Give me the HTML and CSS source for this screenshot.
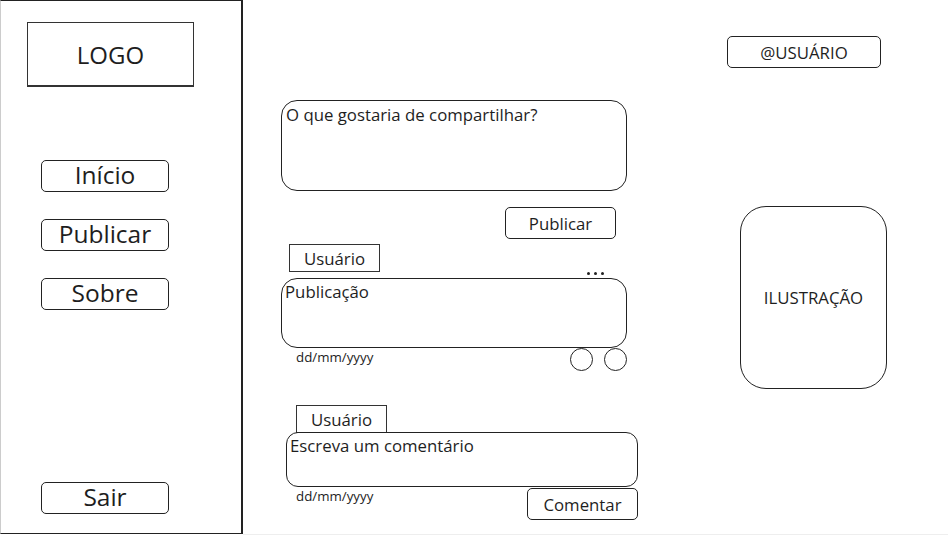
FILE: index.html
```html
<!DOCTYPE html>
<html lang="pt-BR">
<head>
  <meta charset="UTF-8" />
  <title>Rede - Início</title>
  <link rel="stylesheet" href="styles.css">
</head>
<body>
  <aside class="sidebar">
    <div class="logo">LOGO</div>
    <nav class="menu">
      <a class="menu-btn" href="#">Início</a>
      <a class="menu-btn" href="#">Publicar</a>
      <a class="menu-btn" href="#">Sobre</a>
    </nav>
    <a class="menu-btn logout" href="#">Sair</a>
  </aside>

  <main class="content">
    <section class="feed">
      <div class="compose">O que gostaria de compartilhar?</div>
      <button class="btn publish-btn">Publicar</button>

      <div class="post">
        <div class="post-head">
          <div class="user-tag">Usuário</div>
          <div class="dots"><i></i><i></i><i></i></div>
        </div>
        <div class="post-body">Publicação</div>
        <div class="post-meta">
          <span class="date">dd/mm/yyyy</span>
          <div class="reactions">
            <span class="circle"></span>
            <span class="circle"></span>
          </div>
        </div>
      </div>

      <div class="comment">
        <div class="user-tag comment-tag">Usuário</div>
        <div class="comment-body">Escreva um comentário</div>
        <div class="comment-meta">
          <span class="date">dd/mm/yyyy</span>
          <button class="btn comment-btn">Comentar</button>
        </div>
      </div>
    </section>

    <section class="side">
      <div class="handle">@USUÁRIO</div>
      <div class="illustration">ILUSTRAÇÃO</div>
    </section>
  </main>
</body>
</html>
```

FILE: styles.css
```css
* {
  box-sizing: border-box;
}

body {
  margin: 0;
  display: flex;
  font-family: 'Open Sans', 'Noto Sans', sans-serif;
  color: #1e1e1e;
  background: #fff;
  height: 535px;
  overflow: hidden;
}

/* sidebar */
.sidebar {
  width: 243px;
  height: 534px;
  border: 1px solid #222;
  border-left-color: #ccc;
  border-right-width: 2px;
  display: flex;
  flex-direction: column;
  padding: 21px 0 19px 0;
}

.logo {
  width: 167px;
  height: 65px;
  margin-left: 26px;
  border: 1px solid #333;
  border-bottom-width: 2px;
  display: flex;
  align-items: center;
  justify-content: center;
  font-size: 24px;
}

.menu {
  display: flex;
  flex-direction: column;
  gap: 27px;
  margin-top: 73px;
}

.menu-btn {
  width: 128px;
  height: 32px;
  margin-left: 40px;
  padding-bottom: 3px;
  border: 1px solid #222;
  border-radius: 5px;
  display: flex;
  align-items: center;
  justify-content: center;
  font-size: 24.5px;
  color: #1e1e1e;
  text-decoration: none;
}

.logout {
  margin-top: auto;
}

/* main */
.content {
  flex: 1;
  display: flex;
  border-bottom: 1px solid #eee;
  height: 535px;
}

.feed {
  width: 357px;
  margin-left: 38px;
  padding-top: 100px;
  display: flex;
  flex-direction: column;
}

.compose,
.post-body {
  width: 346px;
  border: 1px solid #222;
  border-radius: 16px;
  font-size: 16.8px;
  line-height: 22px;
}

.compose {
  height: 91px;
  padding: 3px 4px;
}

.btn {
  font-family: inherit;
  font-size: 16.8px;
  color: #1e1e1e;
  background: #fff;
  border: 1px solid #222;
  border-radius: 5px;
  height: 32px;
  padding: 0;
}

.publish-btn {
  width: 111px;
  margin: 16px 0 0 224px;
}

.post-head {
  display: flex;
  justify-content: space-between;
  height: 34px;
  margin-top: 5px;
  width: 346px;
}

.user-tag {
  width: 91px;
  height: 28px;
  margin-left: 8px;
  border: 1px solid #333;
  display: flex;
  align-items: center;
  justify-content: center;
  font-size: 16.8px;
}

.dots {
  align-self: flex-end;
  display: flex;
  gap: 4px;
  margin: 0 23px 3px 0;
}

.dots i {
  width: 3px;
  height: 3px;
  border-radius: 50%;
  background: #222;
}

.post-body {
  height: 70px;
  padding: 2px 3px;
}

.post-meta,
.comment-meta {
  display: flex;
  justify-content: space-between;
  align-items: flex-start;
}

.post-meta {
  width: 346px;
}

.date {
  font-size: 13.3px;
  margin-left: 15px;
  line-height: 20px;
}

.post-meta .date {
  margin-top: -1px;
}

.reactions {
  display: flex;
  gap: 11px;
}

.circle {
  width: 23px;
  height: 23px;
  border: 1px solid #222;
  border-radius: 50%;
}

.comment {
  margin-top: 34px;
}

.comment-tag {
  margin-left: 15px;
  height: 28px;
}

.comment-body {
  width: 352px;
  height: 55px;
  margin-left: 5px;
  margin-top: -1px;
  border: 1px solid #222;
  border-radius: 12px;
  padding: 2px 3px;
  font-size: 16.8px;
  line-height: 22px;
}

.comment-meta {
  width: 357px;
  margin-top: 1px;
}

.comment-meta .date {
  margin-top: -2px;
}

.comment-btn {
  width: 111px;
}

/* right column */
.side {
  margin-left: 89px;
  padding-top: 36px;
  display: flex;
  flex-direction: column;
}

.handle {
  width: 154px;
  height: 32px;
  border: 1px solid #222;
  border-radius: 5px;
  display: flex;
  align-items: center;
  justify-content: center;
  font-size: 16.8px;
}

.illustration {
  width: 147px;
  height: 183px;
  margin: 138px 0 0 13px;
  border: 1px solid #222;
  border-radius: 26px;
  display: flex;
  align-items: center;
  justify-content: center;
  font-size: 16.8px;
}
```
